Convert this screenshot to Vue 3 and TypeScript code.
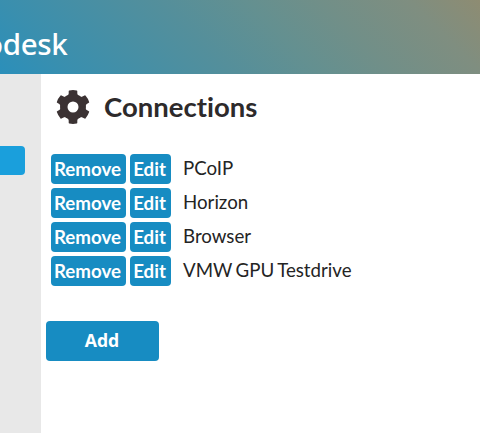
<script setup lang="ts">
interface Connection {
  id: number
  name: string
}

const connections: Connection[] = [
  { id: 1, name: 'PCoIP' },
  { id: 2, name: 'Horizon' },
  { id: 3, name: 'Browser' },
  { id: 4, name: 'VMW GPU Testdrive' },
]

const teeth: number[] = [0, 60, 120, 180, 240, 300]
</script>

<template>
  <div class="page">
    <header class="header">
      <span class="logo">odesk</span>
    </header>
    <div class="body">
      <aside class="sidebar">
        <div class="nav-active"></div>
      </aside>
      <main class="content">
        <h1 class="title">
          <svg class="gear" viewBox="0 0 34 34" aria-hidden="true">
            <circle class="ring" cx="17" cy="17" r="9.2" />
            <path
              v-for="angle in teeth"
              :key="angle"
              :transform="`rotate(${angle} 17 17)`"
              d="M10.4 6.8Q12.7 5.6 12.7 3.6V1.2Q12.7.6 13.3.5Q17-.3 20.7.5Q21.3.6 21.3 1.2V3.6Q21.3 5.6 23.6 6.8L20 10H14Z"
            />
          </svg>
          <span>Connections</span>
        </h1>
        <ul class="list">
          <li v-for="item in connections" :key="item.id" class="row">
            <button class="btn remove" type="button">Remove</button>
            <button class="btn edit" type="button">Edit</button>
            <span class="name">{{ item.name }}</span>
          </li>
        </ul>
        <button class="btn add" type="button">Add</button>
      </main>
    </div>
  </div>
</template>

<style>
body {
  margin: 0;
  background: #fff;
}
</style>

<style scoped>
.page {
  width: 480px;
  height: 433px;
  display: flex;
  flex-direction: column;
  overflow: hidden;
  font-family: Lato, 'Liberation Sans', sans-serif;
  color: #242424;
}
.header {
  box-sizing: border-box;
  height: 74px;
  flex: none;
  display: flex;
  padding-top: 24px;
  background: linear-gradient(45deg, #2b8fba 0%, #3a8fae 14%, #548f9b 42%, #649090 58%, #718f88 71%, #7f8e80 87%, #8e8c72 100%);
}
.logo {
  width: 67.5px;
  display: flex;
  justify-content: flex-end;
  font: 500 29.5px/39px 'Noto Sans', sans-serif;
  letter-spacing: -0.3px;
  color: #fff;
}
.body {
  flex: 1;
  display: flex;
}
.sidebar {
  width: 41px;
  flex: none;
  padding-top: 72px;
  box-sizing: border-box;
  background: #e8e8e8;
}
.nav-active {
  width: 25px;
  height: 29px;
  border-radius: 0 4px 4px 0;
  background: #1a9fdc;
}
.content {
  flex: 1;
  min-width: 0;
}
.title {
  display: flex;
  align-items: center;
  gap: 14px;
  height: 36px;
  margin: 15px 0 0 15px;
  font-size: 27.5px;
  font-weight: 700;
  line-height: 36px;
  font-variant-ligatures: none;
  color: #2d2a2b;
}
.gear {
  width: 34px;
  height: 34px;
  flex: none;
  fill: #3b3233;
}
.ring {
  fill: none;
  stroke: #3b3233;
  stroke-width: 7.4;
}
.list {
  list-style: none;
  margin: 29px 0 0 10px;
  padding: 0;
  display: flex;
  flex-direction: column;
  gap: 4px;
}
.row {
  display: flex;
  align-items: center;
  height: 30px;
}
.btn {
  box-sizing: border-box;
  display: flex;
  align-items: center;
  justify-content: center;
  border: 0;
  padding: 0 2px 0 0;
  border-radius: 4px;
  background: #178cc2;
  color: #fff;
  font-family: inherit;
  font-weight: 700;
  font-size: 18.7px;
  white-space: nowrap;
}
.remove {
  width: 75px;
  height: 30px;
}
.edit {
  width: 41px;
  height: 30px;
  margin-left: 4px;
}
.name {
  margin-left: 12px;
  padding-bottom: 2px;
  font-size: 18.7px;
  line-height: 28px;
  word-spacing: -1.3px;
  white-space: nowrap;
}
.add {
  width: 113px;
  height: 40px;
  margin: 35px 0 0 4.5px;
  padding: 0 0 2px;
  font-family: 'Open Sans', sans-serif;
  font-size: 17.7px;
}
</style>
